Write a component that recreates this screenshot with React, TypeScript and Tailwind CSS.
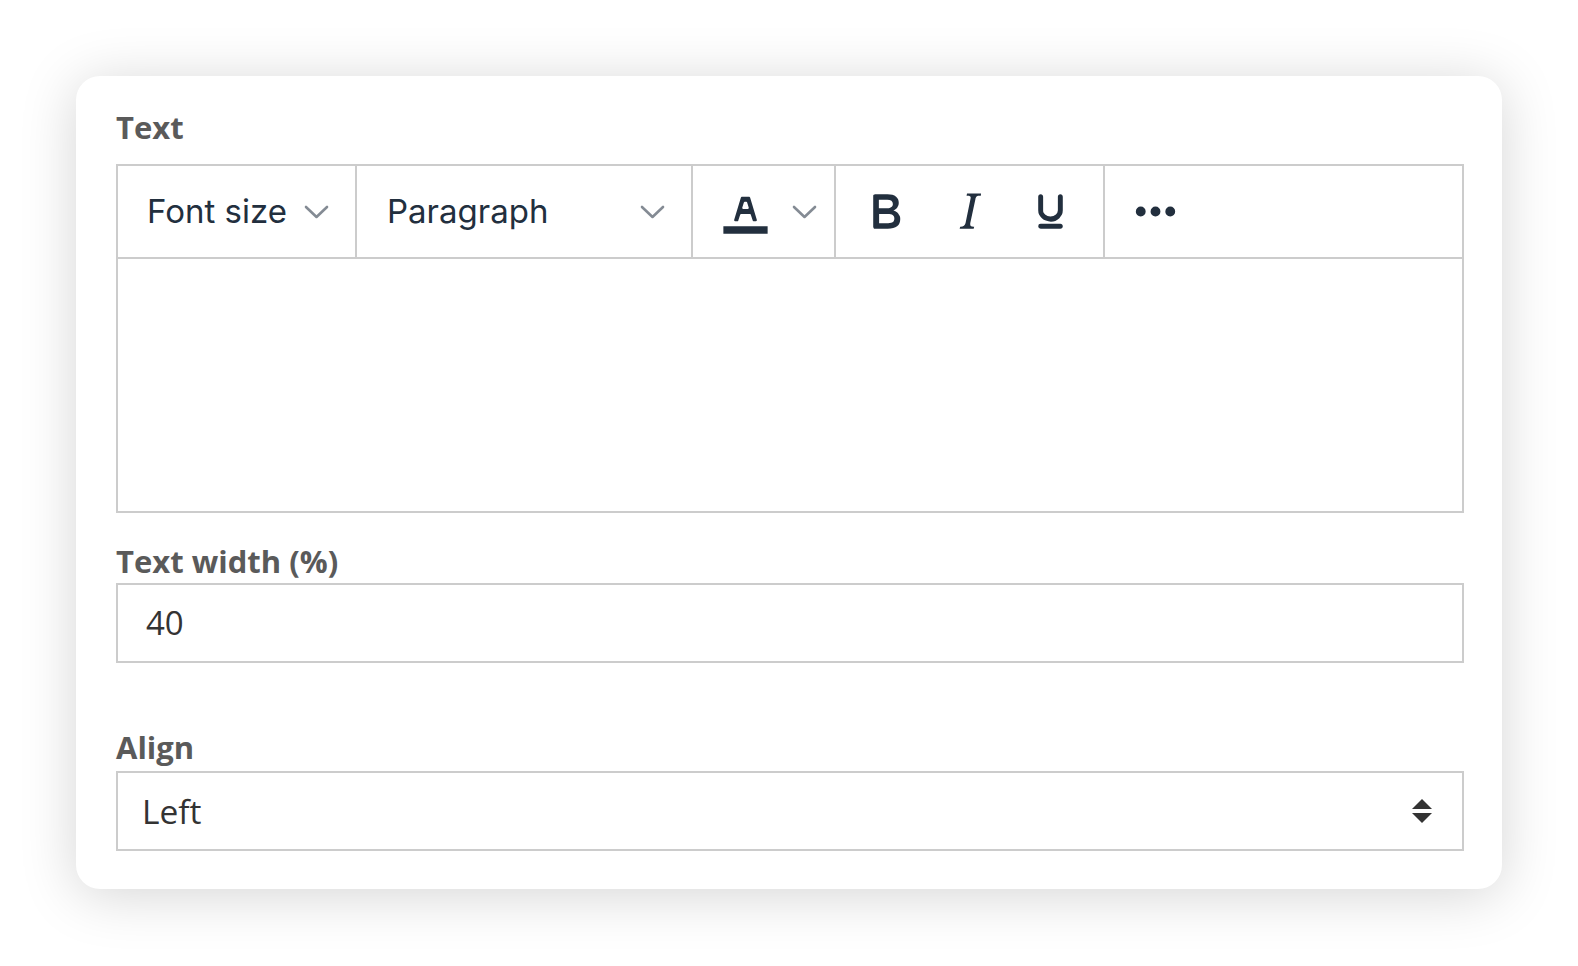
import React from "react"

const ink = "#222f3e"

function Chevron() {
    return (
        <svg width="25" height="25" viewBox="0 0 25 25" className="shrink-0">
            <path d="M2 8 L12.5 18 L23 8" fill="none" stroke="#848b94" strokeWidth="2.6" strokeLinecap="round" strokeLinejoin="round" />
        </svg>
    )
}

function Icon({ d, className }: { d: string; className?: string }) {
    return (
        <svg width="59" height="59" viewBox="0 0 24 24" className={"shrink-0 " + (className ?? "")}>
            <path fill={ink} d={d} />
        </svg>
    )
}

const boldPath =
    "M7.8 19c-.3 0-.5 0-.6-.2l-.2-.5V5.7c0-.2 0-.4.2-.5l.6-.2h5c1.5 0 2.7.3 3.5 1 .7.6 1.1 1.4 1.1 2.5a3 3 0 0 1-.6 1.9c-.4.6-1 1-1.6 1.2.4.1.9.3 1.3.6s.8.7 1 1.2c.4.4.5 1 .5 1.6 0 1.3-.4 2.3-1.3 3-.8.7-2.1 1-3.8 1H7.8zm5-8.3c.6 0 1.2-.1 1.6-.5.4-.3.6-.7.6-1.3 0-1.1-.8-1.700-2.3-1.7H9.3v3.5h3.4zm.5 6c.7 0 1.3-.1 1.7-.4.4-.4.6-.9.6-1.5s-.2-1-.7-1.4c-.4-.3-1-.4-2-.4H9.4v3.8h4z"
const italicPath =
    "M16.7 4.7l-.1.9h-.3c-.6 0-1 0-1.4.3-.3.3-.4.6-.5 1.1l-2.1 9.8v.6c0 .5.4.8 1.4.8h.2l-.2.8H8l.2-.8h.2c1.1 0 1.8-.5 2-1.5l2-9.8.1-.5c0-.6-.4-.8-1.4-.8h-.3l.2-.9h5.8z"
const underlinePath =
    "M16 5c.6 0 1 .4 1 1v5.5a4 4 0 0 1-.4 1.8l-1 1.4a5.3 5.3 0 0 1-5.5 1 5 5 0 0 1-1.6-1c-.5-.4-.8-.9-1.1-1.4a4 4 0 0 1-.4-1.8V6c0-.6.4-1 1-1s1 .4 1 1v5.5c0 .3 0 .6.2 1l.6.7a3.3 3.3 0 0 0 2.2.8 3.4 3.4 0 0 0 2.2-.8c.3-.2.4-.5.6-.8l.2-.9V6c0-.6.4-1 1-1zM8 17h8c.6 0 1 .4 1 1s-.4 1-1 1H8a1 1 0 0 1 0-2z"
const textColorPath =
    "M8.7 16h-.8a.5.5 0 0 1-.5-.6l2.7-9c.1-.3.3-.4.5-.4h2.8c.2 0 .4.1.5.4l2.7 9a.5.5 0 0 1-.5.6h-.8a.5.5 0 0 1-.4-.4l-.7-2.2c0-.3-.3-.4-.5-.4h-3.4c-.2 0-.4.1-.5.4l-.7 2.2c0 .3-.2.4-.4.4zm2.6-7.6l-.6 2a.5.5 0 0 0 .5.6h1.6a.5.5 0 0 0 .5-.6l-.6-2c0-.3-.3-.4-.5-.4h-.4c-.2 0-.4.1-.5.4zM3 18h18v3H3z"
const morePath =
    "M6 10a2 2 0 0 0-2 2c0 1.1.9 2 2 2a2 2 0 0 0 2-2 2 2 0 0 0-2-2zm12 0a2 2 0 0 0-2 2c0 1.1.9 2 2 2a2 2 0 0 0 2-2 2 2 0 0 0-2-2zm-6 0a2 2 0 0 0-2 2c0 1.1.9 2 2 2a2 2 0 0 0 2-2 2 2 0 0 0-2-2z"

function Label({ children, className }: { children: React.ReactNode; className?: string }) {
    return (
        <div
            className={
                "font-['Open_Sans',sans-serif] font-bold text-[31px] leading-[40px] text-[#5a5a5a] " +
                (className ?? "")
            }
        >
            {children}
        </div>
    )
}

export default function App() {
    const toolbarFont = "font-['Inter',sans-serif] text-[33px] leading-none text-[#222f3e]"
    return (
        <div className="min-h-screen bg-white pt-[76px] pl-[76px]">
            <div className="w-[1426px] h-[813px] bg-white rounded-[24px] shadow-[0_6px_56px_rgba(0,0,0,0.17)] pl-[40px] pr-[38px] pt-[31px]">
                <Label className="mb-[17px]">Text</Label>

                {/* editor */}
                <div className="border-2 border-[#cccccc] flex flex-col">
                    <div className="flex h-[93px] border-b-2 border-[#cccccc]">
                        <div className={"w-[239px] border-r-2 border-[#cccccc] flex items-center justify-between pl-[29px] pr-[26px] " + toolbarFont}>
                            <span>Font size</span>
                            <Chevron />
                        </div>
                        <div className={"w-[336px] border-r-2 border-[#cccccc] flex items-center justify-between pl-[30px] pr-[26px] " + toolbarFont}>
                            <span>Paragraph</span>
                            <Chevron />
                        </div>
                        <div className="w-[143px] border-r-2 border-[#cccccc] flex items-center pl-[22.6px]">
                            <Icon d={textColorPath} />
                            <div className="ml-[17px] flex">
                                <Chevron />
                            </div>
                        </div>
                        <div className="w-[269px] border-r-2 border-[#cccccc] flex items-center pl-[19.5px]">
                            <Icon d={boldPath} />
                            <Icon d={italicPath} className="ml-[25px]" />
                            <Icon d={underlinePath} className="ml-[22px]" />
                        </div>
                        <div className="flex-1 flex items-center pl-[21px]">
                            <Icon d={morePath} />
                        </div>
                    </div>
                    <div className="h-[252px] bg-white" />
                </div>

                <Label className="mt-[28px] mb-[2px]">Text width (%)</Label>
                <div className="h-[80px] border-2 border-[#cccccc] flex items-center pl-[28px] font-['Open_Sans',sans-serif] text-[33px] text-[#333333]">
                    40
                </div>

                <Label className="mt-[64px] mb-[4px]">Align</Label>
                <div className="h-[80px] border-2 border-[#cccccc] flex items-center justify-between pl-[24px] pr-[29px] font-['Open_Sans',sans-serif] text-[33.5px] text-[#333333]">
                    <span>Left</span>
                    <svg width="22" height="26" viewBox="0 0 22 26">
                        <path d="M11 1 L21 11 L1 11 Z" fill="#333333" />
                        <path d="M1 15 L21 15 L11 25 Z" fill="#333333" />
                    </svg>
                </div>
            </div>
        </div>
    )
}
